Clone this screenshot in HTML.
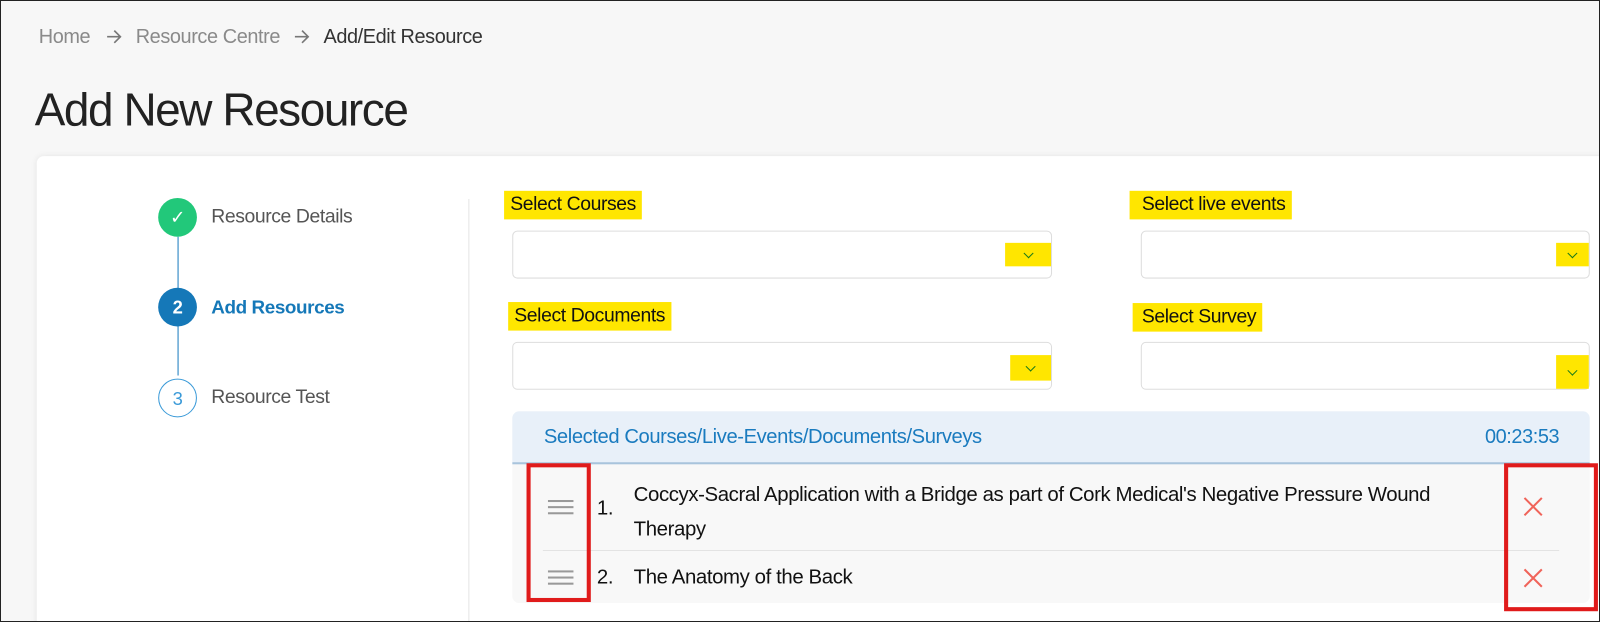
<!DOCTYPE html>
<html><head><meta charset="utf-8"><style>
*{box-sizing:border-box;margin:0;padding:0}
html,body{width:1600px;height:622px;overflow:hidden;background:#f7f7f7}
body{font-family:"Liberation Sans",sans-serif;letter-spacing:-0.4px}
#o{position:absolute;left:0;top:0;width:1600px;height:622px;overflow:hidden;border:1px solid #222}
#w{position:absolute;left:-1px;top:-1px;width:1568px;height:610px;transform:scale(1.0204);transform-origin:0 0}
.a{position:absolute;white-space:nowrap}
.bc{font-size:19.5px;color:#8a8a8a;top:25px}
.card{position:absolute;left:36px;top:153px;width:1570px;height:480px;background:#fff;border-radius:7px;box-shadow:0 0 6px rgba(0,0,0,.08)}
.circ{position:absolute;left:155px;width:38px;height:38px;border-radius:50%;text-align:center;line-height:38px;font-size:18px}
.lab{font-size:19px;color:#555}
.y{background:#ffe600;color:#111;font-size:19px;padding:3px 6px;height:28px;line-height:22px}
.inp{position:absolute;border:1px solid #ddd;border-radius:5px;height:47px;background:#fff}
.chev{position:absolute;background:#ffe600}
.chev:after{content:"";position:absolute;left:50%;top:50%;width:6px;height:6px;border-right:1.5px solid #1a7a1a;border-bottom:1.5px solid #1a7a1a;transform:translate(-50%,-75%) rotate(45deg)}
.red{position:absolute;border:4px solid #e01b1b}
.ham{position:absolute;left:537px;width:25px;height:14px;border-top:2.5px solid #999;border-bottom:2.5px solid #999}
.ham:after{content:"";position:absolute;left:0;right:0;top:3.5px;border-top:2.5px solid #999}
.x{position:absolute;left:1493px}
.t{font-size:20px;color:#111}
.arr{position:absolute;top:29px}
</style></head><body><div id="o"><div id="w">
<div class="a bc" style="left:38px">Home</div>
<svg class="arr" style="left:104px" width="16" height="14"><path d="M1 7H14M8 1L14 7L8 13" stroke="#777" stroke-width="1.6" fill="none"/></svg>
<div class="a bc" style="left:133px">Resource Centre</div>
<svg class="arr" style="left:288px" width="16" height="14"><path d="M1 7H14M8 1L14 7L8 13" stroke="#777" stroke-width="1.6" fill="none"/></svg>
<div class="a bc" style="left:317px;color:#333">Add/Edit Resource</div>
<div class="a" style="left:34px;top:82px;font-size:45px;color:#222;letter-spacing:-1.4px">Add New Resource</div>
<div class="card"></div>
<div class="a" style="left:174px;top:232px;height:136px;border-left:1px solid #1a7bbf"></div>
<div class="circ" style="top:194px;background:#22c87a;color:#fff">✓</div>
<div class="circ" style="top:282px;background:#1578b8;color:#fff;font-weight:bold">2</div>
<div class="circ" style="top:371px;background:#fff;border:1px solid #3a9ad8;color:#3a9ad8">3</div>
<div class="a lab" style="left:207px;top:202px">Resource Details</div>
<div class="a lab" style="left:207px;top:290px;color:#1578b8;font-weight:bold;font-size:18.5px">Add Resources</div>
<div class="a lab" style="left:207px;top:379px">Resource Test</div>
<div class="a" style="left:459px;top:195px;height:430px;border-left:1px solid #e5e5e5"></div>
<div class="a y" style="left:494px;top:187px">Select Courses</div>
<div class="a y" style="left:1107px;top:187px;padding-left:12px">Select live events</div>
<div class="a y" style="left:498px;top:296px">Select Documents</div>
<div class="a y" style="left:1110px;top:297px;padding-left:9px">Select Survey</div>
<div class="inp" style="left:502px;top:226px;width:529px"></div>
<div class="inp" style="left:1118px;top:226px;width:440px"></div>
<div class="inp" style="left:502px;top:335px;width:529px"></div>
<div class="inp" style="left:1118px;top:335px;width:440px"></div>
<div class="chev" style="left:985px;top:238px;width:45px;height:23px"></div>
<div class="chev" style="left:1525px;top:238px;width:32px;height:23px"></div>
<div class="chev" style="left:990px;top:348px;width:40px;height:25px"></div>
<div class="chev" style="left:1525px;top:348px;width:32px;height:33px"></div>
<div class="a" style="left:502px;top:403px;width:1056px;height:188px;background:#f8f8f8;border-radius:7px;overflow:hidden">
<div style="height:52px;background:#e8f0f9;border-bottom:2px solid #a8c4dc"></div>
<div style="position:absolute;left:30px;right:30px;top:136px;border-top:1px solid #e3e3e3"></div>
</div>
<div class="a" style="left:533px;top:417px;font-size:19.8px;color:#1a7bbf">Selected Courses/Live-Events/Documents/Surveys</div>
<div class="a" style="right:40px;top:417px;font-size:19.5px;color:#1a7bbf">00:23:53</div>
<div class="ham" style="top:490px"></div>
<div class="ham" style="top:559px"></div>
<div class="a t" style="left:585px;top:487px">1.</div>
<div class="a t" style="left:621px;top:468px;line-height:34px">Coccyx-Sacral Application with a Bridge as part of Cork Medical's Negative Pressure Wound<br>Therapy</div>
<div class="a t" style="left:585px;top:555px">2.</div>
<div class="a t" style="left:621px;top:555px">The Anatomy of the Back</div>
<svg class="x" style="top:487px" width="19" height="19"><path d="M1 1L18 18M18 1L1 18" stroke="#f0645a" stroke-width="2"/></svg>
<svg class="x" style="top:557px" width="19" height="19"><path d="M1 1L18 18M18 1L1 18" stroke="#f0645a" stroke-width="2"/></svg>
<div class="red" style="left:516px;top:454px;width:63px;height:136px"></div>
<div class="red" style="left:1474px;top:454px;width:92px;height:145px"></div>
</div></div></body></html>
